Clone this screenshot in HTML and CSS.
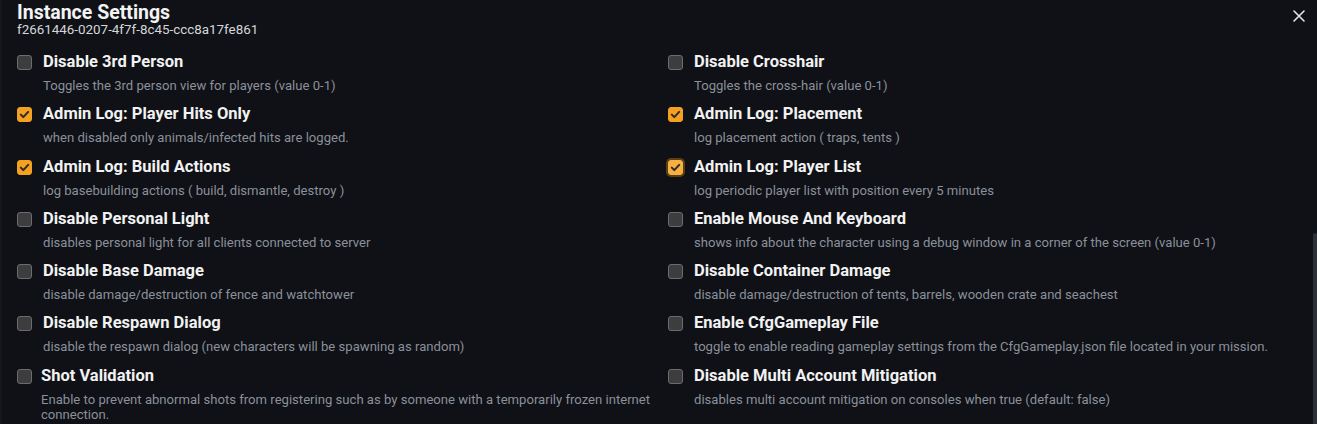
FILE: index.html
```html
<!DOCTYPE html>
<html>
<head>
<meta charset="utf-8">
<link rel="stylesheet" href="styles.css">
</head>
<body>
<div class="dialog">
  <header class="head">
    <h1 class="title">Instance Settings</h1>
    <div class="uuid">f2661446-0207-4f7f-8c45-ccc8a17fe861</div>
    <button class="close" aria-label="Close">
      <svg width="14" height="14" viewBox="0 0 14 14"><path d="M2 2L12 12M12 2L2 12" stroke="#e6e6e6" stroke-width="1.6" stroke-linecap="round"/></svg>
    </button>
  </header>
  <div class="grid">
    <div class="opt"><span class="box"></span><div class="txt"><div class="name">Disable 3rd Person</div><div class="desc">Toggles the 3rd person view for players (value 0-1)</div></div></div>
    <div class="opt"><span class="box"></span><div class="txt"><div class="name">Disable Crosshair</div><div class="desc">Toggles the cross-hair (value 0-1)</div></div></div>

    <div class="opt"><span class="box on"><svg viewBox="0 0 15 15"><path d="M3.8 7.6L6.3 10.1L11.2 4.9" fill="none" stroke="#2b2b2b" stroke-width="2" stroke-linecap="round" stroke-linejoin="round"/></svg></span><div class="txt"><div class="name">Admin Log: Player Hits Only</div><div class="desc">when disabled only animals/infected hits are logged.</div></div></div>
    <div class="opt"><span class="box on"><svg viewBox="0 0 15 15"><path d="M3.8 7.6L6.3 10.1L11.2 4.9" fill="none" stroke="#2b2b2b" stroke-width="2" stroke-linecap="round" stroke-linejoin="round"/></svg></span><div class="txt"><div class="name">Admin Log: Placement</div><div class="desc">log placement action ( traps, tents )</div></div></div>

    <div class="opt"><span class="box on"><svg viewBox="0 0 15 15"><path d="M3.8 7.6L6.3 10.1L11.2 4.9" fill="none" stroke="#2b2b2b" stroke-width="2" stroke-linecap="round" stroke-linejoin="round"/></svg></span><div class="txt"><div class="name">Admin Log: Build Actions</div><div class="desc">log basebuilding actions ( build, dismantle, destroy )</div></div></div>
    <div class="opt"><span class="box on focus"><svg viewBox="0 0 15 15"><path d="M3.8 7.6L6.3 10.1L11.2 4.9" fill="none" stroke="#2b2b2b" stroke-width="2" stroke-linecap="round" stroke-linejoin="round"/></svg></span><div class="txt"><div class="name">Admin Log: Player List</div><div class="desc">log periodic player list with position every 5 minutes</div></div></div>

    <div class="opt"><span class="box"></span><div class="txt"><div class="name">Disable Personal Light</div><div class="desc">disables personal light for all clients connected to server</div></div></div>
    <div class="opt"><span class="box"></span><div class="txt"><div class="name">Enable Mouse And Keyboard</div><div class="desc">shows info about the character using a debug window in a corner of the screen (value 0-1)</div></div></div>

    <div class="opt"><span class="box"></span><div class="txt"><div class="name">Disable Base Damage</div><div class="desc">disable damage/destruction of fence and watchtower</div></div></div>
    <div class="opt"><span class="box"></span><div class="txt"><div class="name">Disable Container Damage</div><div class="desc">disable damage/destruction of tents, barrels, wooden crate and seachest</div></div></div>

    <div class="opt"><span class="box"></span><div class="txt"><div class="name">Disable Respawn Dialog</div><div class="desc">disable the respawn dialog (new characters will be spawning as random)</div></div></div>
    <div class="opt"><span class="box"></span><div class="txt"><div class="name">Enable CfgGameplay File</div><div class="desc">toggle to enable reading gameplay settings from the CfgGameplay.json file located in your mission.</div></div></div>

    <div class="opt tight"><span class="box"></span><div class="txt"><div class="name">Shot Validation</div><div class="desc">Enable to prevent abnormal shots from registering such as by someone with a temporarily frozen internet connection.</div></div></div>
    <div class="opt"><span class="box"></span><div class="txt"><div class="name">Disable Multi Account Mitigation</div><div class="desc">disables multi account mitigation on consoles when true (default: false)</div></div></div>
  </div>
  <div class="scrollbar"></div>
</div>
</body>
</html>
```

FILE: styles.css
```css
html, body {
  margin: 0;
  padding: 0;
  background: #0f1116;
  height: 100%;
  overflow: hidden;
}
.dialog {
  position: relative;
  height: 424px;
  font-family: Roboto, "Noto Sans", sans-serif;
  color: #f1f1f1;
  border-left: 2px solid #15171c;
  box-sizing: border-box;
}
.head {
  position: relative;
  padding: 3px 0 0 15px;
}
.title {
  margin: 0;
  font-size: 19.5px;
  font-weight: 700;
  line-height: 20px;
  color: #f3f3f3;
}
.uuid {
  font-size: 13.4px;
  line-height: 14px;
  color: #d4d6da;
}
.close {
  position: absolute;
  top: 9px;
  right: 11px;
  width: 14px;
  height: 14px;
  padding: 0;
  border: 0;
  background: none;
  display: flex;
}
.grid {
  display: grid;
  grid-template-columns: 651px 1fr;
  row-gap: 11.3px;
  padding: 15px 0 0 15px;
}
.opt {
  display: flex;
  gap: 11px;
  align-items: flex-start;
  padding-right: 6px;
}
.opt.tight { gap: 9px; }
.box {
  flex: none;
  width: 15px;
  height: 15px;
  margin-top: 3px;
  box-sizing: border-box;
  border: 1px solid #6c6c6e;
  border-radius: 3px;
  background: #3d3d3f;
  display: flex;
}
.box svg { width: 100%; height: 100%; }
.box.on {
  background: #f5a01f;
  border-color: #f5a01f;
}
.box.on svg { margin: -1px; width: 15px; height: 15px; }
.box.focus {
  background: #f6b040;
  border-color: #f6b040;
  box-shadow: 0 0 0 2px #5b3f14;
}
.name {
  font-size: 16.5px;
  font-weight: 700;
  line-height: 20px;
  color: #f2f2f2;
}
.desc {
  margin-top: 6px;
  font-size: 13.1px;
  line-height: 15px;
  color: #8b909a;
}
.scrollbar {
  position: absolute;
  right: 0;
  top: 233px;
  width: 4px;
  bottom: 0;
  background: #2e3137;
  border-radius: 3px 3px 0 0;
}
```
